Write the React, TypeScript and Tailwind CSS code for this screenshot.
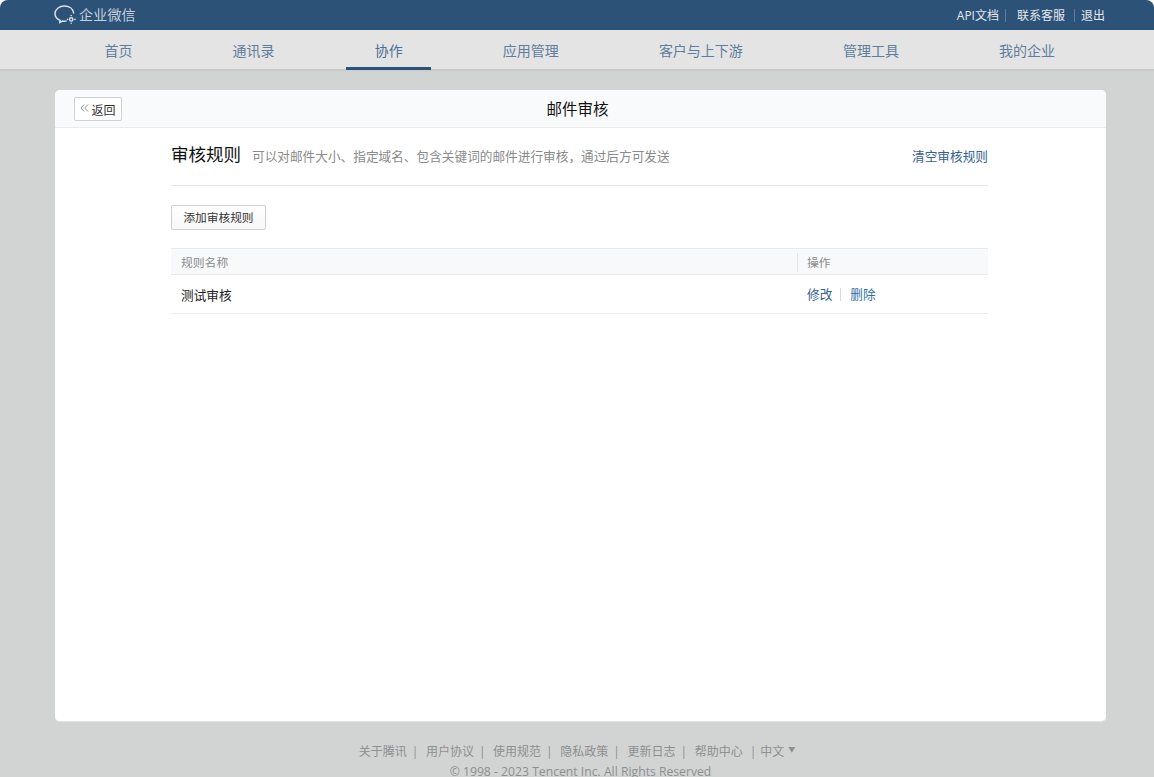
import React from 'react';

const navItems = ['首页', '通讯录', '协作', '应用管理', '客户与上下游', '管理工具', '我的企业'];
const footerLinks = ['关于腾讯', '用户协议', '使用规范', '隐私政策', '更新日志', '帮助中心'];

const Logo = () => (
  <svg width="24" height="20" viewBox="0 0 24 20" fill="none" stroke="#d5dde6" strokeWidth="1.5" strokeLinecap="round">
    <path d="M6 15.4 C3 14 1 11.6 1 8.8 C1 4.4 5.2 1 10.4 1 C15.2 1 19 3.8 19.6 8" />
    <path d="M6 15.4 L5.8 17.4 L8.6 16 C9.6 16.2 10.6 16.3 12 16.1" />
    <circle cx="17.2" cy="14.4" r="1.7" />
    <circle cx="17.2" cy="10.6" r="0.8" fill="#d5dde6" stroke="none" />
    <circle cx="21" cy="14.4" r="0.8" fill="#d5dde6" stroke="none" />
    <circle cx="13.6" cy="14.4" r="0.8" fill="#d5dde6" stroke="none" />
    <circle cx="17.2" cy="18.2" r="0.8" fill="#d5dde6" stroke="none" />
  </svg>
);

export default function App() {
  return (
    <div className="h-[777px] overflow-hidden bg-white">
      <div className="h-full bg-[#d2d4d3] rounded-t-[8px] overflow-hidden font-['Open_Sans','Noto_Sans_CJK_SC',sans-serif] text-[13px]">
        <header className="h-[30px] bg-[#2d5278] flex items-center justify-between pl-[54px] pr-[49px] text-[#e4e9ef]">
          <div className="flex items-center gap-[1px]">
            <Logo />
            <span className="text-[14px] text-[#c5d0db] tracking-[0.2px] -mt-[1px]">企业微信</span>
          </div>
          <div className="flex items-center text-[12px] mt-[1px]">
            <span>API文档</span>
            <span className="w-px h-[13px] bg-[#5f7d9b] ml-[6px] mr-[11px]"></span>
            <span>联系客服</span>
            <span className="w-px h-[13px] bg-[#5f7d9b] ml-[9px] mr-[6px]"></span>
            <span>退出</span>
          </div>
        </header>

        <nav className="h-10 bg-[#e4e4e4] border-b border-[#c6c7c7] shadow-[0_1px_1px_#c9caca] pl-[76px] flex gap-[43.1px]">
          {navItems.map((item) => (
            <div
              key={item}
              className={
                item === '协作'
                  ? 'h-10 px-[28.5px] flex items-center text-[14px] text-[#4c6f95] border-y-[3px] border-t-transparent border-b-[#2d5278]'
                  : 'h-10 px-[28.5px] flex items-center text-[14px] text-[#5f7d9c]'
              }
            >
              {item}
            </div>
          ))}
        </nav>

        <main className="mt-5 mx-[55px] h-[632px] w-[1051px] bg-white rounded-[5px] border-b border-[#e2e3e3] overflow-hidden">
          <div className="relative h-[38px] bg-[#f9fafc] border-b border-[#eaebed] flex items-center justify-center">
            <button className="absolute left-[19px] top-[7px] h-6 w-12 bg-white border border-[#d0d1d3] rounded-[2px] flex items-center justify-center text-[12px] text-[#333]">
              <svg width="9" height="8" viewBox="0 0 9 8" fill="none" stroke="#8d8d8d" strokeWidth="1" className="mr-[2px] -mt-[3px]">
                <path d="M4.2 0.5 L1 4 L4.2 7.5" />
                <path d="M8 0.5 L4.8 4 L8 7.5" />
              </svg>
              <span className="mt-[3px]">返回</span>
            </button>
            <span className="text-[15.5px] text-[#111] -ml-[6px] mt-[2px]">邮件审核</span>
          </div>

          <div className="mx-[116px] w-[817px]">
            <div className="h-[58px] pb-[4px] border-b border-[#e6e7e8] flex items-center justify-between">
              <div className="flex items-center">
                <span className="text-[17.5px] text-[#111]">审核规则</span>
                <span className="ml-[11px] mt-[4px] text-[12.67px] text-[#8a8a8a]">可以对邮件大小、指定域名、包含关键词的邮件进行审核，通过后方可发送</span>
              </div>
              <span className="text-[12.67px] mt-[4px] text-[#366290]">清空审核规则</span>
            </div>

            <button className="mt-[19px] h-[25px] w-[95px] bg-gradient-to-b from-white to-[#f7f7f7] border border-[#cfd0d2] rounded-[2px] text-[11.7px] text-[#333] flex items-center justify-center">
              添加审核规则
            </button>

            <div className="mt-[18px] h-[27px] bg-[#f8f9fb] border-y border-[#e8e9eb] flex items-center text-[11.8px] text-[#8a8a8a]">
              <div className="w-[626px] pl-[10px] mt-[2px]">规则名称</div>
              <div className="h-[19px] border-l border-[#e3e4e6] pl-[9px] flex items-center mt-[2px]">操作</div>
            </div>

            <div className="h-[39px] border-b border-[#eceded] flex items-center text-[12.67px]">
              <div className="w-[626px] pl-[10px] mt-[2px] text-[#222]">测试审核</div>
              <div className="pl-[10px] mt-[1px] flex items-center text-[#366290]">
                <span>修改</span>
                <span className="w-px h-[13px] bg-[#d8dadd] ml-[8px] mr-[9px]"></span>
                <span className="text-[#2f6fa3]">删除</span>
              </div>
            </div>
          </div>
        </main>

        <footer className="mt-[21px] text-[12px] text-[#8d8f90] flex flex-col items-center">
          <div className="flex items-center h-[18px]">
            {footerLinks.map((link) => (
              <React.Fragment key={link}>
                <span>{link}</span>
                <span className={link === '帮助中心' ? 'ml-[7px] mr-[4px]' : 'ml-[5px] mr-[7.6px]'}>|</span>
              </React.Fragment>
            ))}
            <span>中文</span>
            <span className="ml-[4px] text-[7px] -mt-[3px]">▼</span>
          </div>
          <div className="h-[20px] leading-[22px] text-[12.2px] ml-[7px]">© 1998 - 2023 Tencent Inc. All Rights Reserved</div>
        </footer>
      </div>
    </div>
  );
}
